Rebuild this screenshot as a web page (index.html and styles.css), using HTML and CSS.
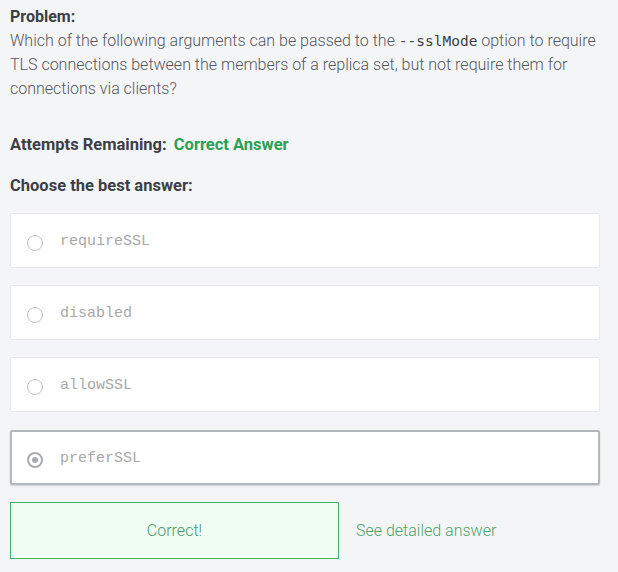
FILE: index.html
```html
<!DOCTYPE html>
<html>
<head>
<meta charset="utf-8">
<link rel="stylesheet" href="styles.css">
</head>
<body>
<div class="page">
  <div class="problem-title">Problem:</div>
  <p class="problem-text">Which of the following arguments can be passed to the <code>--sslMode</code> option to require TLS connections between the members of a replica set, but not require them for connections via clients?</p>
  <div class="attempts"><span class="label">Attempts Remaining:</span> <span class="status">Correct Answer</span></div>
  <div class="choose">Choose the best answer:</div>
  <div class="options">
    <div class="option"><span class="radio"></span><span class="opt-text">requireSSL</span></div>
    <div class="option"><span class="radio"></span><span class="opt-text">disabled</span></div>
    <div class="option"><span class="radio"></span><span class="opt-text">allowSSL</span></div>
    <div class="option selected"><span class="radio checked"></span><span class="opt-text">preferSSL</span></div>
  </div>
  <div class="result-row">
    <div class="correct-box">Correct!</div>
    <a class="detail-link">See detailed answer</a>
  </div>
</div>
</body>
</html>
```
FILE: styles.css
```css
html, body {
  margin: 0;
  padding: 0;
  background: #f4f5f7;
}
.page {
  padding: 5px 18px 0 10px;
  font-family: Roboto, "Liberation Sans", sans-serif;
  color: #55585e;
}
.problem-title {
  font-weight: 700;
  font-size: 16px;
  line-height: 23px;
  color: #3c3f45;
}
.problem-text {
  margin: 1px 0 0;
  font-size: 16px;
  font-weight: 300;
  line-height: 24px;
}
.problem-text code {
  font-family: "DejaVu Sans Mono", monospace;
  font-size: 14.5px;
  line-height: 1;
  color: #3c3f45;
}
.attempts {
  margin-top: 32px;
  font-size: 16.5px;
  line-height: 23px;
  font-weight: 700;
  color: #3c3f45;
}
.attempts .status {
  color: #2aa052;
  margin-left: 3px;
}
.choose {
  margin-top: 18px;
  font-size: 16.5px;
  line-height: 23px;
  font-weight: 700;
  color: #3c3f45;
}
.options {
  margin-top: 16px;
  display: flex;
  flex-direction: column;
  gap: 17px;
}
.option {
  height: 55px;
  box-sizing: border-box;
  background: #fff;
  border: 1px solid #e6e8eb;
  border-radius: 2px;
  display: flex;
  align-items: center;
  padding-left: 16px;
}
.option.selected {
  border: 2px solid #b3b7bc;
  box-shadow: 0 1px 2px rgba(0,0,0,0.15);
  padding-left: 15px;
  margin-top: 1px;
}
.radio {
  width: 16px;
  height: 16px;
  box-sizing: border-box;
  border: 1px solid #bfc1c4;
  border-radius: 50%;
  margin-top: 5px;
  position: relative;
  flex: none;
}
.radio.checked {
  border: 2px solid #a9acb0;
}
.radio.checked::after {
  content: "";
  position: absolute;
  left: 3px;
  top: 3px;
  width: 6px;
  height: 6px;
  border-radius: 50%;
  background: #a9acb0;
}
.opt-text {
  margin-left: 17px;
  margin-top: 2px;
  font-family: "Liberation Mono", monospace;
  font-size: 15px;
  color: #a8a8a8;
}
.result-row {
  margin-top: 17px;
  display: flex;
  align-items: center;
}
.correct-box {
  width: 329px;
  height: 57px;
  box-sizing: border-box;
  border: 1px solid #3db36b;
  background: #effdf3;
  color: #4d9a67;
  font-size: 16px;
  font-weight: 300;
  display: flex;
  align-items: center;
  justify-content: center;
}
.detail-link {
  margin-left: 17px;
  font-size: 16px;
  font-weight: 300;
  color: #4aa56b;
}
```
